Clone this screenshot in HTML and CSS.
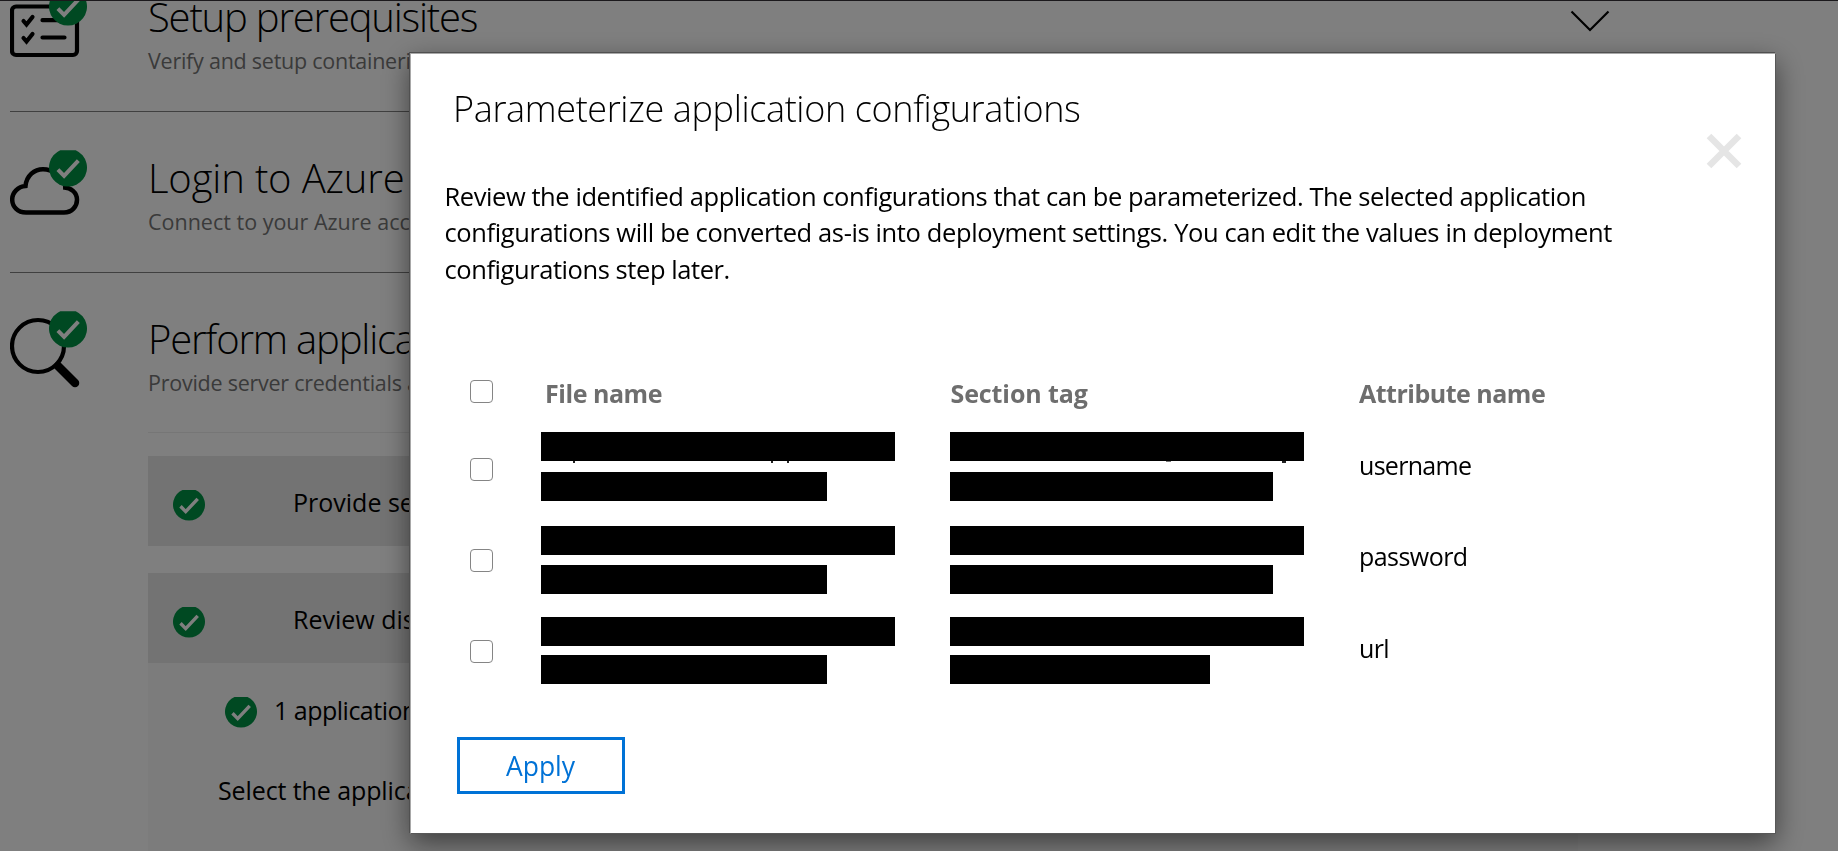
FILE: index.html
```html
<!DOCTYPE html>
<html lang="en">
<head>
<meta charset="utf-8">
<title>App Containerization</title>
<link rel="stylesheet" href="styles.css">
</head>
<body>
<svg width="0" height="0" class="defs">
  <symbol id="ok" viewBox="0 0 32 32">
    <path d="M9.500 1h13A16 16 0 1 1 9.500 1z" fill="#009245"/>
    <path d="M7.500 17.300l5.200 5.300L24.700 9.800" fill="none" stroke="#fff" stroke-width="3.400"/>
  </symbol>
</svg>
<main class="page">
  <section class="step">
    <div class="step-icon">
      <svg class="glyph" width="70" height="70" viewBox="0 0 70 70" fill="none" stroke="#000">
        <rect x="2" y="14.500" width="65" height="48.500" rx="4" stroke-width="4.200"/>
        <path d="M13.500 29l3 3.500 6-7.500M13.500 46l3 3.500 6-7.500" stroke-width="4.200" stroke-linecap="round"/>
        <path d="M32.500 28.200h22M32.500 45.500h22" stroke-width="4.200" stroke-linecap="round"/>
      </svg>
      <svg class="badge" width="38" height="38"><use href="#ok"/></svg>
    </div>
    <div class="step-body">
      <h2 class="step-title t1">Setup prerequisites</h2>
      <p class="step-sub s1">Verify and setup containerization prerequisites</p>
    </div>
    <svg class="chevron" width="40" height="24" viewBox="0 0 40 24"><path d="M1.500 1.500L20 20 38.500 1.500" fill="none" stroke="#000" stroke-width="2.200"/></svg>
  </section>
  <section class="step">
    <div class="step-icon">
      <svg class="glyph" width="70" height="70" viewBox="0 0 70 70" fill="none" stroke="#000" stroke-width="4.500">
        <path d="M53 34.500C61 34 67 39.800 67 46.700C67 53.500 62 59.500 54 59.500H16C7.500 59.500 2.200 53.500 2.200 46.500C2.200 39.500 8 33.500 15.500 33C16.500 22.500 24.500 16.200 33 16.200C43 16.200 50 22 52 31"/>
      </svg>
      <svg class="badge" width="38" height="38"><use href="#ok"/></svg>
    </div>
    <div class="step-body">
      <h2 class="step-title t2">Login to Azure</h2>
      <p class="step-sub s2">Connect to your Azure account</p>
    </div>
  </section>
  <section class="step last">
    <div class="step-icon">
      <svg class="glyph" width="70" height="76" viewBox="0 0 70 76" fill="none" stroke="#000">
        <circle cx="28" cy="32" r="26" stroke-width="4.200"/>
        <path d="M48 52l17 17" stroke-width="8.500" stroke-linecap="round"/>
      </svg>
      <svg class="badge" width="38" height="38"><use href="#ok"/></svg>
    </div>
    <div class="step-body">
      <h2 class="step-title t3">Perform application</h2>
      <p class="step-sub s3">Provide server credentials and</p>
      <div class="panels">
        <div class="panel-head"><svg class="tick" width="32" height="32"><use href="#ok"/></svg><span>Provide server</span></div>
        <div class="panel">
          <div class="panel-head"><svg class="tick" width="32" height="32"><use href="#ok"/></svg><span>Review discovered</span></div>
          <div class="found"><svg width="32" height="32"><use href="#ok"/></svg><span>1 application</span></div>
          <p class="hint">Select the application</p>
        </div>
      </div>
    </div>
  </section>
</main>
<div class="overlay"></div>
<div class="topline"></div>
<div class="modal" role="dialog">
  <svg class="close" width="36" height="36" viewBox="0 0 36 36"><path d="M3 3l30 30M33 3L3 33" stroke="#e5e5e5" stroke-width="6.500"/></svg>
  <h1 class="title">Parameterize application configurations</h1>
  <p class="intro"><span class="l1">Review the identified application configurations that can be parameterized. The selected application</span><br><span class="l2">configurations will be converted as-is into deployment settings. You can edit the values in deployment</span><br><span class="l3">configurations step later.</span></p>
  <div class="grid head">
    <i class="box"></i><b class="h1">File name</b><b class="h2">Section tag</b><b class="h3">Attribute name</b>
  </div>
  <div class="grid r1">
    <i class="box"></i>
    <div class="redact"><i class="bar w354"><i class="tail f1"></i><i class="tail f2"></i><i class="tail f3"></i></i><i class="bar w286"></i></div>
    <div class="redact"><i class="bar w354"><i class="tail g1"></i><i class="tail g2"></i></i><i class="bar w323"></i></div>
    <span class="v1">username</span>
  </div>
  <div class="grid r2">
    <i class="box"></i>
    <div class="redact"><i class="bar w354"></i><i class="bar w286"></i></div>
    <div class="redact"><i class="bar w354"></i><i class="bar w323"></i></div>
    <span class="v2">password</span>
  </div>
  <div class="grid r3">
    <i class="box"></i>
    <div class="redact"><i class="bar w354"></i><i class="bar w286"></i></div>
    <div class="redact"><i class="bar w354"></i><i class="bar w260"></i></div>
    <span class="v3">url</span>
  </div>
  <button class="apply">Apply</button>
</div>
</body>
</html>
```
FILE: styles.css
```css
* { box-sizing: border-box; }
html, body { height: 100%; }
body {
  margin: 0;
  overflow: hidden;
  background: #fff;
  color: #000;
  font-family: "Open Sans", "Noto Sans", sans-serif;
}
h1, h2, p { margin: 0; font-weight: 400; white-space: nowrap; }
.defs { position: absolute; }

/* Wizard page behind the dialog */
.page { margin: -49px 0 0 10px; width: 1568px; }
.step {
  display: flex;
  height: 161px;
  border-bottom: 1px solid #808080;
  position: relative;
}
.step.last { height: auto; border: 0; }
.step-icon { position: relative; width: 138px; flex: none; padding-top: 41px; }
.glyph { display: block; }
.badge { position: absolute; left: 39px; top: 37px; }
.step-body { flex: 1; padding-top: 40px; min-width: 0; }
.step-title { font-size: 40px; font-weight: 300; line-height: 52px; letter-spacing: -1.2px; }
.t2 { letter-spacing: -.15px; }
.step-sub { margin-top: 3px; font-size: 21.5px; line-height: 30px; height: 30px; color: #757575; letter-spacing: -.25px; }
.s2 { letter-spacing: 0; }
.chevron { position: absolute; right: -32px; top: 58.5px; }
.panels { margin-top: 34px; padding-top: 23px; border-top: 1px solid #ececec; }
.panel-head {
  display: flex;
  align-items: center;
  height: 90px;
  padding: 1px 0 0 25px;
  background: #e6e6e6;
  font-size: 25px;
}
.panel-head .tick { margin-right: 88px; position: relative; top: 3px; }
.panel { margin-top: 27px; height: 300px; background: #f9f9f9; }
.found { display: flex; align-items: center; gap: 17px; height: 97px; padding-left: 77px; font-size: 25px; letter-spacing: -.5px; }
.found span { margin-top: -4px; }
.hint { padding-left: 70px; margin-top: 12px; font-size: 25px; line-height: 36px; letter-spacing: -.1px; }

.overlay { position: fixed; inset: 0; background: rgba(0, 0, 0, .5); }
.topline { position: fixed; top: 0; left: 0; right: 0; height: 1px; background: #1b191c; }

/* Dialog */
.modal {
  position: fixed;
  left: 410px;
  top: 53px;
  width: 1366px;
  height: 781px;
  background: #fff;
  border: 1px solid #a8a8a8;
  border-right-color: #585858;
  border-bottom-color: #585858;
  box-shadow: -1px -1px 0 #505050, 0 9px 26px rgba(0, 0, 0, .5);
}
.close { position: absolute; left: 1294.5px; top: 78.5px; }
.title { padding: 27px 0 0 42px; font-size: 36px; font-weight: 300; line-height: 56px; letter-spacing: -.36px; }
.intro { padding: 40.5px 0 0 33.5px; height: 150px; font-size: 25.5px; line-height: 36.6px; }
.l1, .l3 { letter-spacing: -.43px; }
.l2 { letter-spacing: -.38px; }
.grid {
  display: grid;
  grid-template-columns: 71px 409px 409px 1fr;
  padding-left: 59px;
  align-items: start;
  font-size: 25px;
  line-height: 36px;
}
.box { width: 23px; height: 23px; border: 1px solid #858585; border-radius: 4px; }
.head { margin-top: 94px; height: 51px; color: #6e6e6e; }
.head .box { margin-top: -1px; }
.head b { margin-top: -6px; }
.h1 { padding-left: 4px; letter-spacing: -.45px; }
.h2 { padding-left: .5px; letter-spacing: -.1px; }
.h3 { letter-spacing: -.5px; }
.v1 { margin-top: 15px; letter-spacing: -.7px; }
.v2 { margin-top: 12px; letter-spacing: -.55px; }
.v3 { margin-top: 13px; letter-spacing: -.7px; }
.redact { display: flex; flex-direction: column; }
.bar { display: block; height: 29px; background: #000; position: relative; }
.w354 { width: 354px; }
.w323 { width: 323px; }
.w286 { width: 286px; }
.w260 { width: 260px; }
.tail { position: absolute; top: 29px; width: 2px; height: 2px; background: #222; }
.f1 { left: 32px; }
.f2 { left: 230px; }
.f3 { left: 246px; }
.g1 { left: 216px; width: 5px; height: 1px; background: #777; }
.g2 { left: 332px; width: 4px; }
.apply {
  display: block;
  width: 168px;
  height: 57px;
  margin-left: 45.5px;
  border: 3px solid #0072d6;
  background: #fff;
  color: #0072d6;
  font: 400 26.5px "Open Sans", sans-serif;
  padding: 1px 0 0 0;
}
.r1 { height: 94px; }
.r2 { height: 91px; }
.r3 { height: 120px; }
.r1 .redact { gap: 11px; }
.r2 .redact { gap: 10px; }
.r3 .redact { gap: 9px; }
.r1 .box { margin-top: 26px; }
.r2 .box { margin-top: 23px; }
.r3 .box { margin-top: 23px; }
```
